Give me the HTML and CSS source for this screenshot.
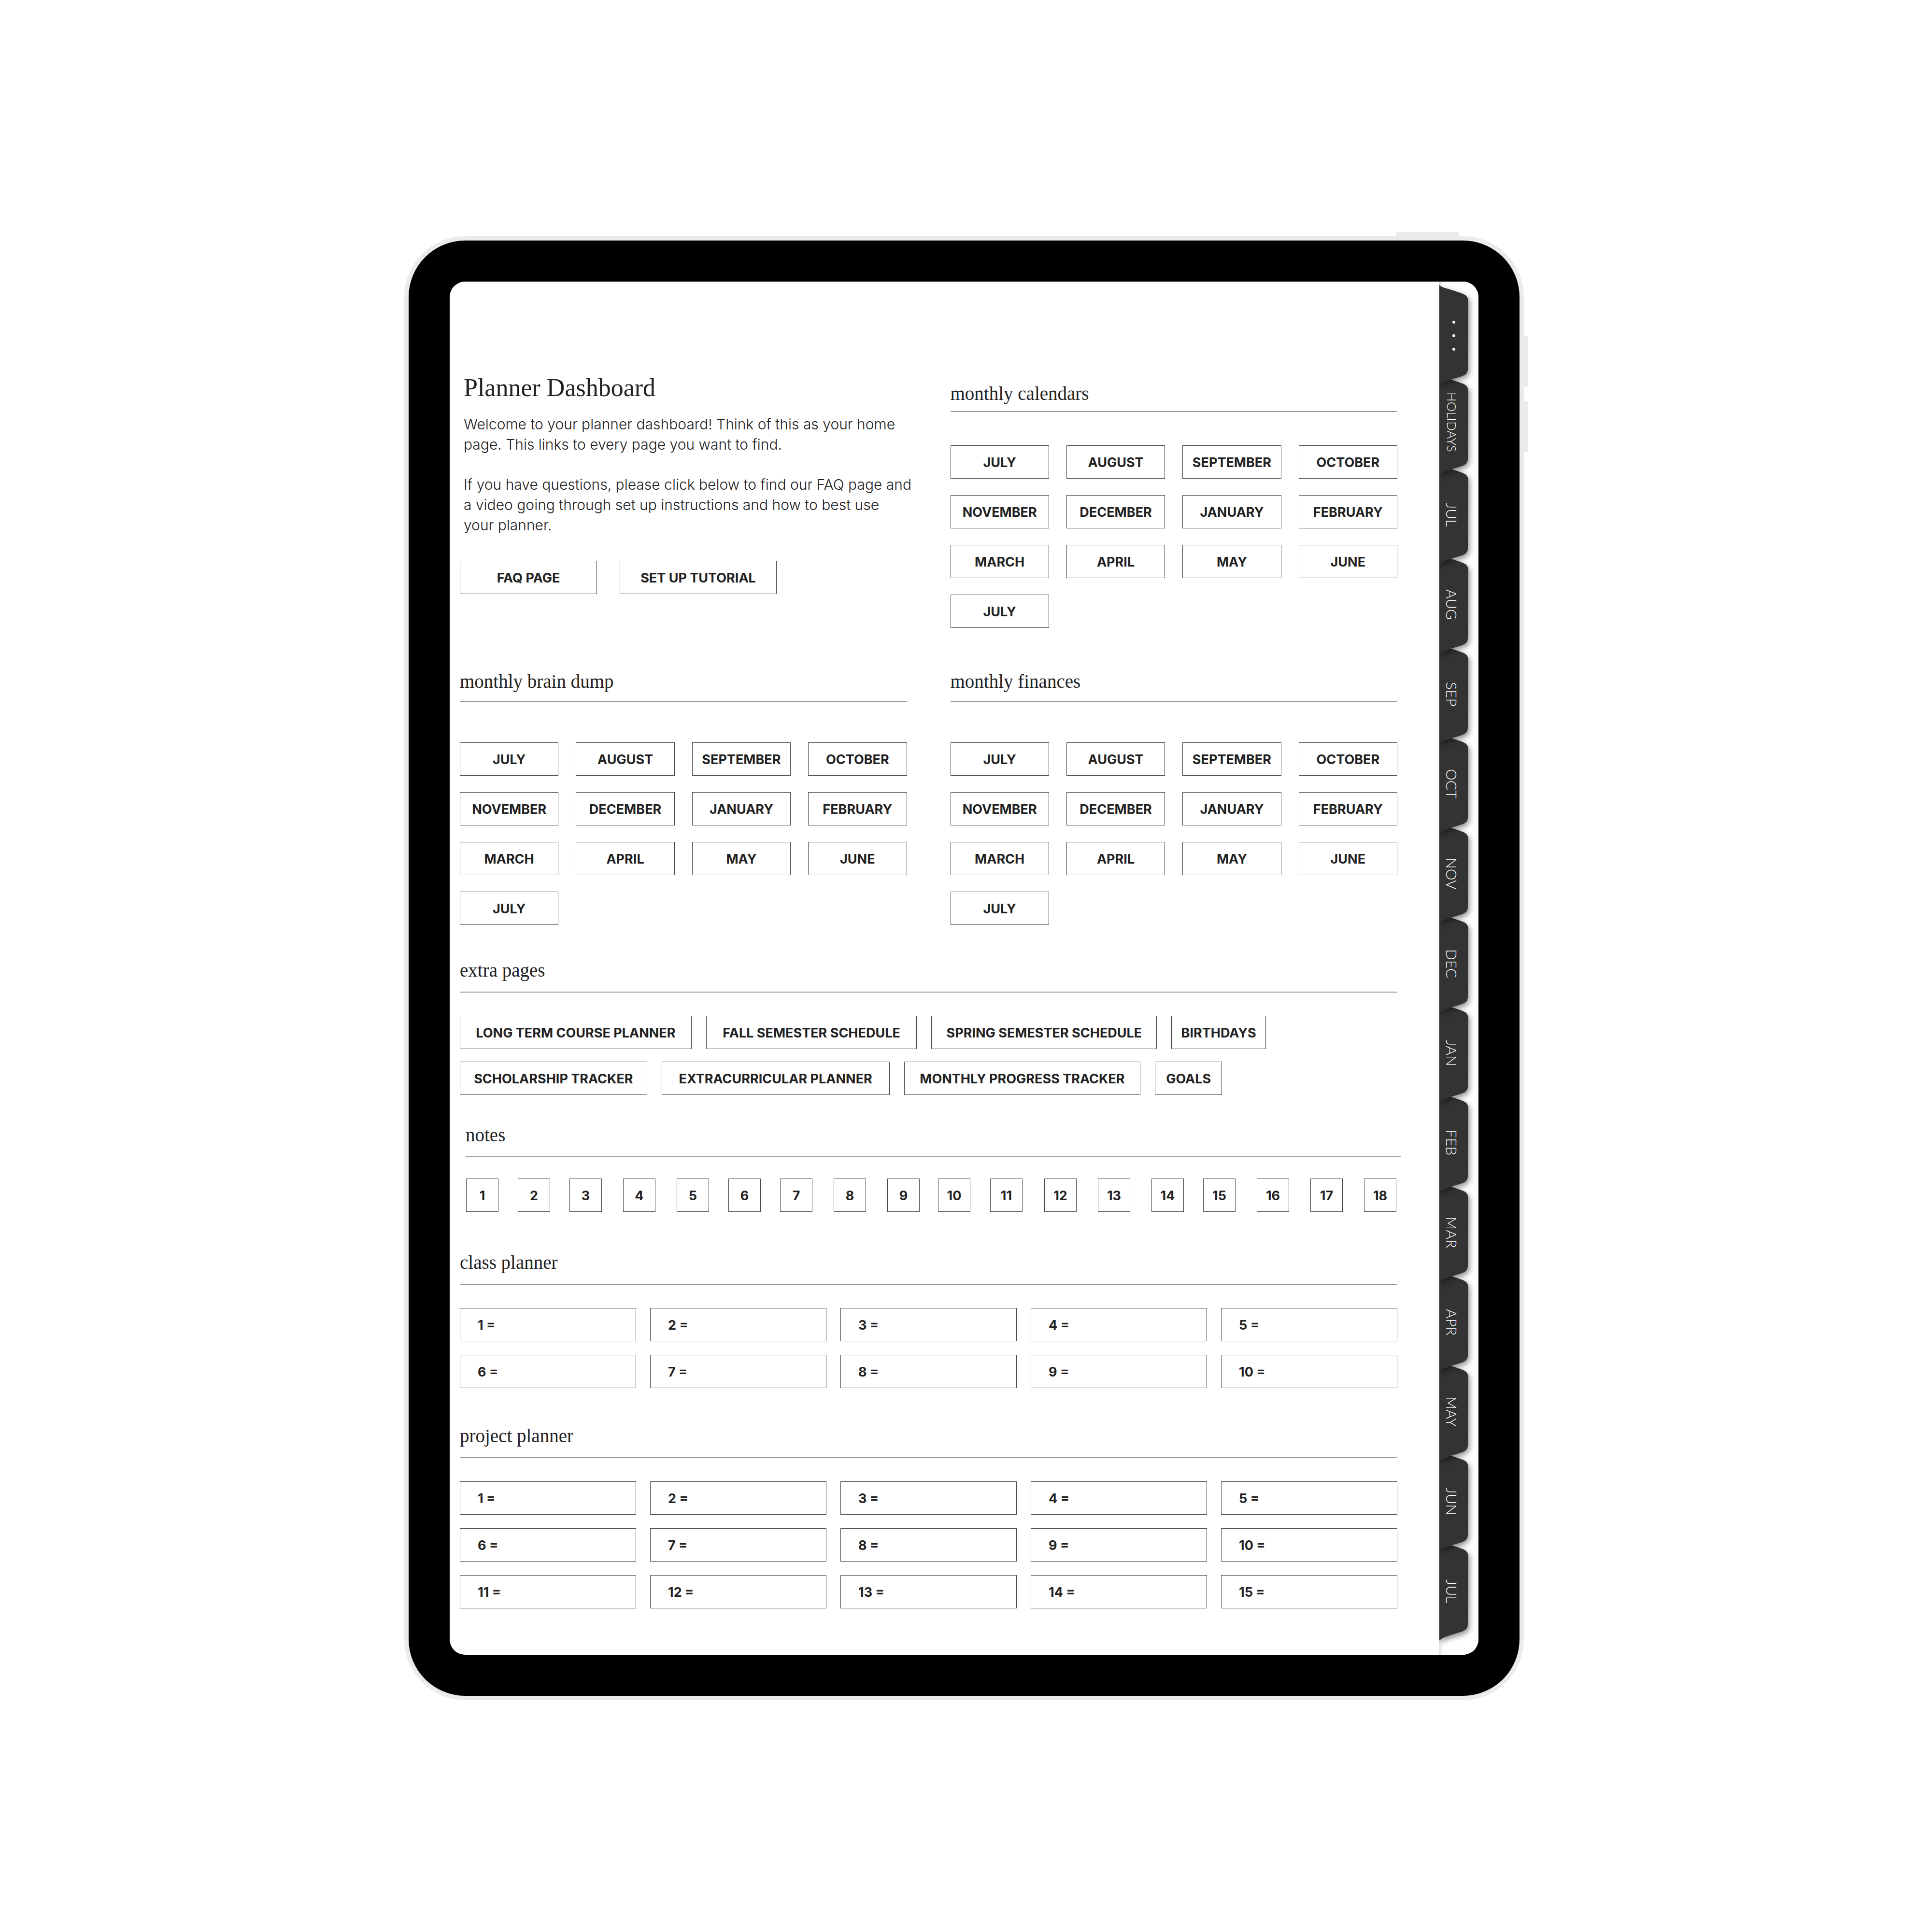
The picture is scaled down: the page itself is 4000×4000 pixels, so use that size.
FILE: index.html
```
<!DOCTYPE html>
<html lang="en">
<head>
<meta charset="utf-8">
<title>Planner Dashboard</title>
<link rel="stylesheet" href="styles.css">
</head>
<body>
<svg class="defs" aria-hidden="true">
  <symbol id="tab" viewBox="0 0 61 208" preserveAspectRatio="none">
    <path d="M0 0C4 4 10 6 18 8C28 11 38 14 46 17C56 20 61 25 61 34L60 174C60 182 56 186 48 189C40 192 30 194 22 197C12 200 4 204 0 208Z"/>
  </symbol>
</svg>
<div class="device">
  <span class="key key-power"></span>
  <span class="key key-up"></span>
  <span class="key key-down"></span>
  <div class="bezel">
    <div class="screen">
      <main class="page">
        <div class="columns">
          <section class="intro">
            <h1>Planner Dashboard</h1>
            <p>Welcome to your planner dashboard! Think of this as your home<br>page. This links to every page you want to find.</p>
            <p>If you have questions, please click below to find our FAQ page and<br>a video going through set up instructions and how to best use<br>your planner.</p>
            <div class="actions">
              <a class="box faq" href="#faq">FAQ PAGE</a>
              <a class="box tutorial" href="#tutorial">SET UP TUTORIAL</a>
            </div>
          </section>
          <section class="calendars">
            <h2>monthly calendars</h2>
            <div class="months">
              <a class="box" href="#c7">JULY</a><a class="box" href="#c8">AUGUST</a><a class="box" href="#c9">SEPTEMBER</a><a class="box" href="#c10">OCTOBER</a>
              <a class="box" href="#c11">NOVEMBER</a><a class="box" href="#c12">DECEMBER</a><a class="box" href="#c1">JANUARY</a><a class="box" href="#c2">FEBRUARY</a>
              <a class="box" href="#c3">MARCH</a><a class="box" href="#c4">APRIL</a><a class="box" href="#c5">MAY</a><a class="box" href="#c6">JUNE</a>
              <a class="box" href="#c7b">JULY</a>
            </div>
          </section>
          <section class="monthly">
            <h2>monthly brain dump</h2>
            <div class="months">
              <a class="box" href="#b7">JULY</a><a class="box" href="#b8">AUGUST</a><a class="box" href="#b9">SEPTEMBER</a><a class="box" href="#b10">OCTOBER</a>
              <a class="box" href="#b11">NOVEMBER</a><a class="box" href="#b12">DECEMBER</a><a class="box" href="#b1">JANUARY</a><a class="box" href="#b2">FEBRUARY</a>
              <a class="box" href="#b3">MARCH</a><a class="box" href="#b4">APRIL</a><a class="box" href="#b5">MAY</a><a class="box" href="#b6">JUNE</a>
              <a class="box" href="#b7b">JULY</a>
            </div>
          </section>
          <section class="monthly">
            <h2>monthly finances</h2>
            <div class="months">
              <a class="box" href="#f7">JULY</a><a class="box" href="#f8">AUGUST</a><a class="box" href="#f9">SEPTEMBER</a><a class="box" href="#f10">OCTOBER</a>
              <a class="box" href="#f11">NOVEMBER</a><a class="box" href="#f12">DECEMBER</a><a class="box" href="#f1">JANUARY</a><a class="box" href="#f2">FEBRUARY</a>
              <a class="box" href="#f3">MARCH</a><a class="box" href="#f4">APRIL</a><a class="box" href="#f5">MAY</a><a class="box" href="#f6">JUNE</a>
              <a class="box" href="#f7b">JULY</a>
            </div>
          </section>
        </div>

        <section class="extra">
          <h2>extra pages</h2>
          <div class="extra-row extra-first">
            <a class="box" href="#course">LONG TERM COURSE PLANNER</a>
            <a class="box" href="#fall">FALL SEMESTER SCHEDULE</a>
            <a class="box" href="#spring">SPRING SEMESTER SCHEDULE</a>
            <a class="box" href="#birthdays">BIRTHDAYS</a>
          </div>
          <div class="extra-row extra-second">
            <a class="box" href="#scholarship">SCHOLARSHIP TRACKER</a>
            <a class="box" href="#extracurricular">EXTRACURRICULAR PLANNER</a>
            <a class="box" href="#progress">MONTHLY PROGRESS TRACKER</a>
            <a class="box" href="#goals">GOALS</a>
          </div>
        </section>

        <section class="notes">
          <h2>notes</h2>
          <div class="note-row">
            <a class="box" href="#n1">1</a><a class="box" href="#n2">2</a><a class="box" href="#n3">3</a><a class="box" href="#n4">4</a><a class="box" href="#n5">5</a><a class="box" href="#n6">6</a>
            <a class="box" href="#n7">7</a><a class="box" href="#n8">8</a><a class="box" href="#n9">9</a><a class="box" href="#n10">10</a><a class="box" href="#n11">11</a><a class="box" href="#n12">12</a>
            <a class="box" href="#n13">13</a><a class="box" href="#n14">14</a><a class="box" href="#n15">15</a><a class="box" href="#n16">16</a><a class="box" href="#n17">17</a><a class="box" href="#n18">18</a>
          </div>
        </section>

        <section class="classes">
          <h2>class planner</h2>
          <div class="slots">
            <a class="box" href="#k1">1 =</a><a class="box" href="#k2">2 =</a><a class="box" href="#k3">3 =</a><a class="box" href="#k4">4 =</a><a class="box" href="#k5">5 =</a>
            <a class="box" href="#k6">6 =</a><a class="box" href="#k7">7 =</a><a class="box" href="#k8">8 =</a><a class="box" href="#k9">9 =</a><a class="box" href="#k10">10 =</a>
          </div>
        </section>

        <section class="projects">
          <h2>project planner</h2>
          <div class="slots">
            <a class="box" href="#p1">1 =</a><a class="box" href="#p2">2 =</a><a class="box" href="#p3">3 =</a><a class="box" href="#p4">4 =</a><a class="box" href="#p5">5 =</a>
            <a class="box" href="#p6">6 =</a><a class="box" href="#p7">7 =</a><a class="box" href="#p8">8 =</a><a class="box" href="#p9">9 =</a><a class="box" href="#p10">10 =</a>
            <a class="box" href="#p11">11 =</a><a class="box" href="#p12">12 =</a><a class="box" href="#p13">13 =</a><a class="box" href="#p14">14 =</a><a class="box" href="#p15">15 =</a>
          </div>
        </section>
      </main>

      <nav class="tabs" aria-label="Sections">
        <a class="tab tab-more" style="z-index:15" href="#more" aria-label="More"><svg><use href="#tab"/></svg><span class="dots"><i></i><i></i><i></i></span></a>
        <a class="tab tab-small" style="z-index:14" href="#holidays"><svg><use href="#tab"/></svg><span>HOLIDAYS</span></a>
        <a class="tab" style="z-index:13" href="#t1"><svg><use href="#tab"/></svg><span>JUL</span></a>
        <a class="tab" style="z-index:12" href="#t2"><svg><use href="#tab"/></svg><span>AUG</span></a>
        <a class="tab" style="z-index:11" href="#t3"><svg><use href="#tab"/></svg><span>SEP</span></a>
        <a class="tab" style="z-index:10" href="#t4"><svg><use href="#tab"/></svg><span>OCT</span></a>
        <a class="tab" style="z-index:9" href="#t5"><svg><use href="#tab"/></svg><span>NOV</span></a>
        <a class="tab" style="z-index:8" href="#t6"><svg><use href="#tab"/></svg><span>DEC</span></a>
        <a class="tab" style="z-index:7" href="#t7"><svg><use href="#tab"/></svg><span>JAN</span></a>
        <a class="tab" style="z-index:6" href="#t8"><svg><use href="#tab"/></svg><span>FEB</span></a>
        <a class="tab" style="z-index:5" href="#t9"><svg><use href="#tab"/></svg><span>MAR</span></a>
        <a class="tab" style="z-index:4" href="#t10"><svg><use href="#tab"/></svg><span>APR</span></a>
        <a class="tab" style="z-index:3" href="#t11"><svg><use href="#tab"/></svg><span>MAY</span></a>
        <a class="tab" style="z-index:2" href="#t12"><svg><use href="#tab"/></svg><span>JUN</span></a>
        <a class="tab" style="z-index:1" href="#t13"><svg><use href="#tab"/></svg><span>JUL</span></a>
      </nav>
    </div>
  </div>
</div>
</body>
</html>
```
FILE: styles.css
```
* { box-sizing: border-box; }

body {
  margin: 0;
  padding: 489px 44px 489px 36px;
  background: #fff;
  color: #222;
  font-family: Inter, "Liberation Sans", sans-serif;
}

a { color: inherit; text-decoration: none; }

.defs { position: absolute; width: 0; height: 0; }

/* Tablet */
.device {
  position: relative;
  max-width: 2318px;
  margin: 0 auto;
  padding: 9px;
  border-radius: 126px;
  background: #ebebeb;
}
.key { position: absolute; background: #ebebeb; }
.key-power { top: -9px; right: 134px; width: 130px; height: 9px; border-radius: 3px 3px 0 0; }
.key-up, .key-down { right: -8px; width: 8px; height: 106px; border-radius: 0 3px 3px 0; }
.key-up { top: 207px; }
.key-down { top: 341px; }

.bezel { padding: 85px; border-radius: 117px; background: #000; }

.screen {
  display: grid;
  grid-template-columns: minmax(0, 1fr) 82px;
  overflow: hidden;
  border-radius: 32px;
  background: #fff;
}

/* Page */
.page { padding: 190px 86px 96px 21px; }

h1, h2 { margin: 0; font-family: "Liberation Serif", serif; font-weight: 400; }
h1 { padding-left: 8px; font-size: 52px; line-height: 60px; }
h2 {
  padding-bottom: 20px;
  border-bottom: 2px solid #999;
  font-size: 39px;
  line-height: 48px;
}

.columns {
  display: grid;
  grid-template-columns: repeat(2, minmax(0, 1fr));
  column-gap: 90px;
}

.intro h1 { margin-bottom: 24px; }
.intro p {
  margin: 0 0 41px;
  padding-left: 8px;
  font-size: 30px;
  font-weight: 300;
  line-height: 42px;
  white-space: nowrap;
}
.actions { display: flex; gap: 47px; margin-top: 53px; }
.faq { width: 284px; }
.tutorial { width: 325px; }

.box {
  display: flex;
  align-items: center;
  justify-content: center;
  height: 69px;
  padding-top: 1px;
  border: 1px solid #444;
  font-size: 27px;
  font-weight: 700;
  white-space: nowrap;
}

.months {
  display: grid;
  grid-template-columns: repeat(4, minmax(0, 1fr));
  gap: 34px 36px;
  margin-top: 84px;
}
.calendars { padding-top: 18px; }
.calendars h2 { padding-bottom: 12px; }
.calendars .months { margin-top: 69px; }
.monthly { padding-top: 87px; }
.monthly h2 { padding-bottom: 16px; }

.extra { margin-top: 70px; }
.extra-row { display: grid; column-gap: 30px; }
.extra-first { margin-top: 48px; grid-template-columns: 480fr 437fr 467fr 196fr 242fr; }
.extra-second { margin-top: 26px; grid-template-columns: 388fr 472fr 490fr 139fr 333fr; }

.notes { margin: 59px -7px 0 12px; }
.note-row {
  display: grid;
  grid-template-columns: 107fr 107fr 111fr 111fr 107fr 107fr 111fr 111fr 105fr 108fr 112fr 111fr 111fr 107fr 111fr 111fr 111fr 67fr;
  margin-top: 44px;
  padding: 0 9px 0 1px;
}
.note-row .box { width: 67px; }

.classes { margin-top: 81px; }
.projects { margin-top: 75px; }
.slots {
  display: grid;
  grid-template-columns: repeat(5, minmax(0, 1fr));
  gap: 28px 29px;
  margin-top: 48px;
}
.slots .box { justify-content: flex-start; padding-left: 36px; }

/* Side tabs */
.tabs {
  display: flex;
  flex-direction: column;
  padding: 7px 21px 51px 0;
  overflow: hidden;
  border-left: 1px solid #ddd;
  background: linear-gradient(90deg, #e4e4e4, #fff 8px);
}
.tab {
  position: relative;
  display: grid;
  flex: 1 1 0;
  min-height: 0;
  place-items: center;
  padding-right: 8px;
  color: #fff;
  font-family: Lato, "Liberation Sans", sans-serif;
  font-size: 30px;
  font-weight: 300;
}
.tab span { position: relative; margin-top: 24px; writing-mode: vertical-rl; }
.tab-small { font-size: 26px; }
.tab-small span { margin-top: 10px; }
.tab-more { padding-right: 0; }
.tab svg {
  position: absolute;
  top: 0;
  left: 0;
  width: 100%;
  height: calc(100% + 22px);
  overflow: visible;
  fill: #333;
  filter: drop-shadow(3px 5px 6px rgba(0, 0, 0, .45));
}
.tab .dots { display: flex; gap: 22px; }
.dots i { width: 6px; height: 6px; border-radius: 50%; background: #fffbee; }
```
